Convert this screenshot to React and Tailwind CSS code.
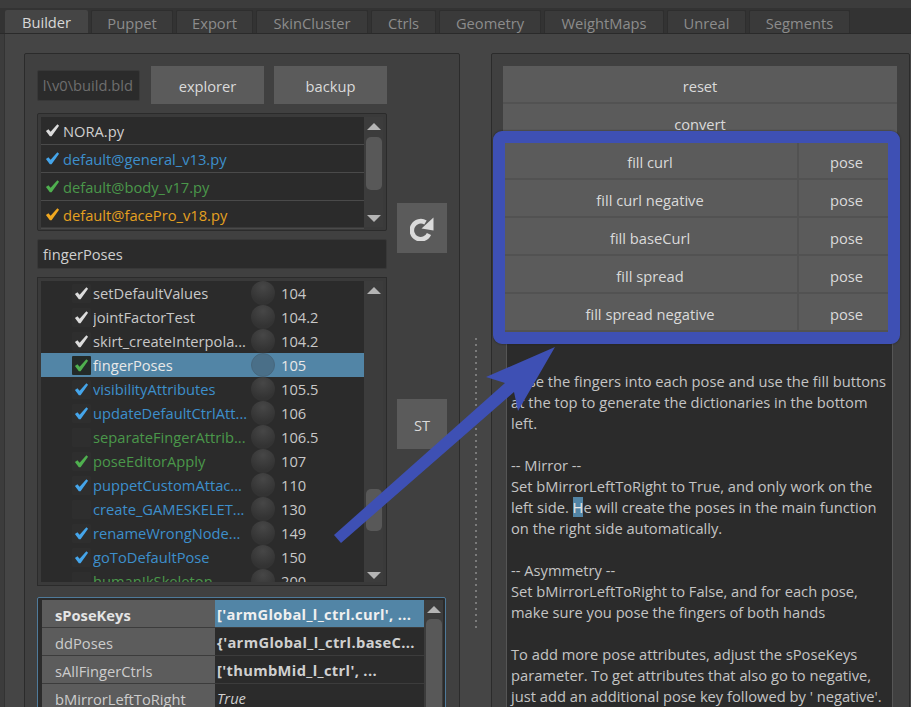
const tabs = [
  ['Builder', 'w-[83px]'],
  ['Puppet', 'w-[82px]'],
  ['Export', 'w-[77px]'],
  ['SkinCluster', 'w-[112px]'],
  ['Ctrls', 'w-[65px]'],
  ['Geometry', 'w-[102px]'],
  ['WeightMaps', 'w-[120px]'],
  ['Unreal', 'w-[79px]'],
  ['Segments', 'w-[101px]'],
]

const files = [
  ['NORA.py', 'text-[#cfcfcf]', 'text-[#dcdcdc]'],
  ['default@general_v13.py', 'text-[#3d8fcb]', 'text-[#45a5ea]'],
  ['default@body_v17.py', 'text-[#4a974a]', 'text-[#4fb04f]'],
  ['default@facePro_v18.py', 'text-[#e5a020]', 'text-[#f0a820]'],
]

const white = ['text-[#c8c8c8]', 'text-[#dcdcdc]']
const blue = ['text-[#3d8fcb]', 'text-[#45a5ea]']
const green = ['text-[#4a974a]', 'text-[#4fb04f]']

const steps = [
  ['setDefaultValues', '104', white, true],
  ['jointFactorTest', '104.2', white, true],
  ['skirt_createInterpola...', '104.2', white, true],
  ['fingerPoses', '105', ['text-[#e8e8e8]', 'text-[#4fb04f]'], true, true],
  ['visibilityAttributes', '105.5', blue, true],
  ['updateDefaultCtrlAtt...', '106', blue, true],
  ['separateFingerAttrib...', '106.5', green, false],
  ['poseEditorApply', '107', green, true],
  ['puppetCustomAttac...', '110', blue, true],
  ['create_GAMESKELET...', '130', blue, false],
  ['renameWrongNode...', '149', blue, true],
  ['goToDefaultPose', '150', blue, true],
  ['humanIkSkeleton', '200', green, false],
]

const params = [
  ['sPoseKeys', "['armGlobal_l_ctrl.curl', ...", true],
  ['ddPoses', "{'armGlobal_l_ctrl.baseC..."],
  ['sAllFingerCtrls', "['thumbMid_l_ctrl', ..."],
  ['bMirrorLeftToRight', 'True'],
]

const fills = ['fill curl', 'fill curl negative', 'fill baseCurl', 'fill spread', 'fill spread negative']

function Check({ className }) {
  return (
    <svg viewBox="0 0 16 16" className={`w-[15px] h-[15px] ${className}`} fill="currentColor">
      <path d="M1 8.5 L3.6 6.6 L6 9.4 L13.2 1.2 L15 2.8 L7 14.2 L5.2 14.2 Z" />
    </svg>
  )
}

function Arrow({ up }) {
  return (
    <div
      className={`w-0 h-0 mx-auto border-x-[7px] border-x-transparent ${
        up ? 'border-b-[7px] border-b-[#b4b4b4]' : 'border-t-[7px] border-t-[#b4b4b4]'
      }`}
    />
  )
}

function Button({ children, className = '', pad = 'pt-[2px]' }) {
  return (
    <div className={`flex items-center justify-center ${pad} bg-[#5b5b5b] text-[#dadada] ${className}`}>
      {children}
    </div>
  )
}

function App() {
  return (
    <div className="relative w-[911px] h-[707px] overflow-hidden bg-[#3c3c3c] font-['Open_Sans',sans-serif] text-[14.7px] text-[#c8c8c8]">
      {/* tab bar */}
      <div className="h-[8px]" />
      <div className="h-[26px] flex gap-[3px] pl-[5px] pt-[2px] bg-[#333333] border-b border-[#2a2a2a]">
        {tabs.map(([name, width], i) => (
          <div
            key={name}
            className={`${width} flex items-center justify-center pt-[2px] rounded-t-[2px] ${
              i === 0 ? 'bg-[#454545] text-[#d8d8d8]' : 'bg-[#3a3a3a] text-[#8c8c8c] border-x border-t border-[#2e2e2e]'
            }`}
          >
            {name}
          </div>
        ))}
      </div>

      {/* main panel */}
      <div className="ml-[4px] h-[673px] flex pl-[19px] pt-[19px] bg-[#454545] border-l border-[#333333]">
        {/* left group */}
        <div className="w-[436px] shrink-0 h-[700px] pl-[12px] pt-[12px] bg-[#404040] border border-[#2b2b2b] rounded-[2px]">
          <div className="flex gap-[10px]">
            <div className="w-[350px] flex flex-col">
              <div className="flex items-center h-[38px] gap-[11px]">
                <div className="flex-none w-[103px] h-[31px] flex items-center justify-end pr-[6px] overflow-hidden whitespace-nowrap bg-[#2b2b2b] border border-[#383838] rounded-[2px] text-[#6e6e6e]">
                  l\v0\build.bld
                </div>
                <Button className="w-[113px] h-[38px]">explorer</Button>
                <Button className="w-[113px] h-[38px] ml-[-1px]">backup</Button>
              </div>

              {/* file list */}
              <div className="mt-[9px] h-[118px] flex p-[3px] bg-[#3a3a3a] border border-[#2b2b2b] rounded-[2px]">
                <div className="w-[323px] bg-[#2b2b2b]">
                  {files.map(([name, color, checkColor]) => (
                    <div key={name} className={`h-[28px] flex items-center pl-[4px] gap-[3px] border-b border-[#4a4a4a] ${color}`}>
                      <Check className={checkColor} />
                      <span className="pt-[1px]">{name}</span>
                    </div>
                  ))}
                </div>
                <div className="w-[19px] pt-[6px] px-[1px] bg-[#3c3c3c]">
                  <Arrow up />
                  <div className="mt-[7px] mx-auto w-[16px] h-[53px] rounded-[5px] bg-[#585858]" />
                  <div className="mt-[25px]">
                    <Arrow />
                  </div>
                </div>
              </div>

              <div className="mt-[8px] h-[30px] flex items-center pl-[5px] bg-[#2b2b2b] border border-[#383838] rounded-[2px] text-[#cfcfcf]">
                fingerPoses
              </div>

              {/* step list */}
              <div className="mt-[8px] h-[309px] flex p-[3px] bg-[#3a3a3a] border border-[#2b2b2b]">
                <div className="w-[324px] overflow-hidden bg-[#2b2b2b]">
                  {steps.map(([name, order, colors, checked, selected]) => (
                    <div key={name} className={`h-[24px] flex items-center ${selected ? 'bg-[#5285a6]' : ''}`}>
                      <div className={`ml-[31px] w-[19px] h-[19px] flex items-center justify-center rounded-[1px] ${selected ? 'bg-[#232a28]' : 'bg-[#2e2e2e]'}`}>
                        {checked && <Check className={colors[1]} />}
                      </div>
                      <div className={`ml-[2px] pt-[1px] w-[158px] overflow-hidden whitespace-nowrap ${colors[0]}`}>{name}</div>
                      <div className={`w-[24px] h-[24px] flex-none rounded-full ${selected ? 'bg-[#4a6f88] border border-[#47677d]' : 'bg-[radial-gradient(circle_at_50%_25%,#474747,#333333_70%)]'}`} />
                      <div className={`ml-[6px] pt-[1px] ${selected ? 'text-[#e8e8e8]' : 'text-[#c8c8c8]'}`}>{order}</div>
                    </div>
                  ))}
                </div>
                <div className="w-[19px] pt-[6px] px-[1px] bg-[#3c3c3c]">
                  <Arrow up />
                  <div className="mt-[195px] mx-auto w-[16px] h-[42px] rounded-[5px] bg-[#585858]" />
                  <div className="mt-[41px]">
                    <Arrow />
                  </div>
                </div>
              </div>
            </div>

            <div className="w-[50px] flex flex-col">
              <Button className="mt-[137px] h-[50px] text-[#c4c4c4]">
                <svg viewBox="0 0 24 24" className="w-[24px] h-[24px]">
                  <path d="M19 17 A9 9 0 1 1 15.5 5.5" fill="none" stroke="currentColor" strokeWidth="4.6" />
                  <path d="M23.5 0.5 L23.5 13.5 L11.5 11.5 Z" fill="currentColor" />
                </svg>
              </Button>
              <Button className="mt-[146px] h-[50px]">ST</Button>
            </div>
          </div>

          {/* parameters */}
          <div className="mt-[11px] w-[409px] flex pl-[4px] pr-[2px] pt-[2px] bg-[#2b2b2b] border border-[#4f7a9a] rounded-[2px]">
            <div className="w-[382px]">
              {params.map(([key, value, selected]) => (
                <div key={key} className="h-[28px] flex border-b border-[#3c3c3c]">
                  <div className={`w-[173px] h-[27px] overflow-hidden pl-[13px] leading-[30px] bg-[#5c5c5c] ${selected ? 'font-bold text-[#e4e4e4]' : 'text-[#cccccc]'}`}>
                    {key}
                  </div>
                  <div className={`flex-1 h-[27px] pl-[2px] leading-[28px] whitespace-nowrap overflow-hidden ${selected ? 'bg-[#5285a6] text-[#f0f0f0]' : 'text-[#d0d0d0]'} ${value === 'True' ? 'italic font-normal' : 'font-bold tracking-[0.35px]'}`}>
                    {value}
                  </div>
                </div>
              ))}
            </div>
            <div className="w-[19px] pt-[6px] bg-[#3c3c3c]">
              <Arrow up />
              <div className="mt-[6px] mx-auto w-[16px] h-[100px] rounded-[5px] bg-[#585858]" />
            </div>
          </div>
        </div>

        {/* gutter with the splitter dots */}
        <div className="w-[31px] shrink-0 flex justify-center pt-[285px]">
          <div className="w-[2px] h-[290px] bg-[repeating-linear-gradient(to_bottom,#7a7a7a_0,#7a7a7a_2px,transparent_2px,transparent_6px)]" />
        </div>

        {/* right group */}
        <div className="w-[419px] shrink-0 h-[700px] pl-[11px] pt-[12px] bg-[#404040] border border-[#2b2b2b] rounded-[2px]">
          <div className="w-[394px] flex flex-col">
            <Button pad="pt-[4px]" className="h-[38px] border-b-2 border-[#525252]">reset</Button>
            <Button pad="pt-[4px]" className="h-[38px] border-b-2 border-[#525252]">convert</Button>
            {fills.map((name) => (
              <div key={name} className="h-[38px] flex">
                <Button pad="pt-[4px]" className="w-[294px] border-b-2 border-[#525252]">{name}</Button>
                <Button pad="pt-[4px]" className="flex-1 pr-[3px] border-b-2 border-l-2 border-[#525252]">pose</Button>
              </div>
            ))}
            <div className="h-[400px] ml-[3px] mr-[4px] pl-[4px] pt-[39px] bg-[#2b2b2b] border-x border-[#555555] leading-[21px] whitespace-nowrap text-[#c4c4c4]">
              <div>Pose the fingers into each pose and use the fill buttons</div>
              <div>at the top to generate the dictionaries in the bottom</div>
              <div>left.</div>
              <div className="h-[21px]" />
              <div>-- Mirror --</div>
              <div>Set bMirrorLeftToRight to True, and only work on the</div>
              <div>
                left side. <span className="bg-[#5285a6] text-[#e8e8e8]">H</span>e will create the poses in the main function
              </div>
              <div>on the right side automatically.</div>
              <div className="h-[21px]" />
              <div>-- Asymmetry --</div>
              <div>Set bMirrorLeftToRight to False, and for each pose,</div>
              <div>make sure you pose the fingers of both hands</div>
              <div className="h-[21px]" />
              <div>To add more pose attributes, adjust the sPoseKeys</div>
              <div>parameter. To get attributes that also go to negative,</div>
              <div>just add an additional pose key followed by ' negative'.</div>
            </div>
          </div>
        </div>
      </div>

      {/* annotation drawn over the screenshot */}
      <div className="absolute left-[493px] top-[131px] w-[407px] h-[213px] border-[12px] border-[#3e50b4] rounded-[9px] shadow-[0_0_2px_#1f1f1f]" />
      <svg className="absolute left-0 top-0 w-[911px] h-[707px] pointer-events-none" viewBox="0 0 911 707">
        <path d="M334 535 L505 383 L486 377 L555 347 L518 411 L514 392 L341 543 Z" fill="#3e50b4" />
      </svg>
    </div>
  )
}

export default App
